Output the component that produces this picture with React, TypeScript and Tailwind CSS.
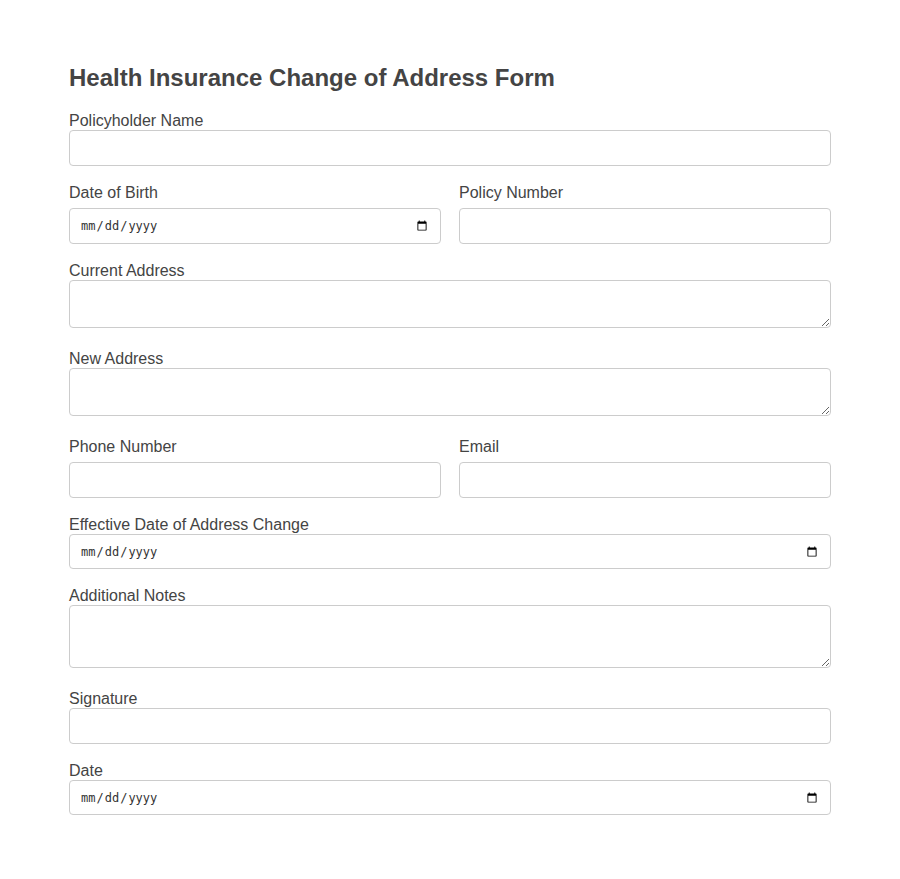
const inputCls =
  'block w-full h-[36px] rounded-[4px] border border-[#cccccc] bg-white px-[10px] text-[13px] text-black outline-none';
const dateCls =
  "block w-full h-[35px] rounded-[4px] border border-[#cccccc] bg-white px-[10px] font-['DejaVu_Sans_Mono',monospace] text-[12px] text-[#333333] outline-none";
const areaCls = 'block w-full rounded-[4px] border border-[#cccccc] bg-white px-[10px] py-[8px] text-[13px] text-black outline-none';
const labelCls = 'block pt-[1px] text-[16px] leading-[18px]';

export default function App() {
  return (
    <div className="min-h-screen bg-white font-['Liberation_Sans',Arial,sans-serif] text-[#444444]">
      <form className="mx-auto w-[762px] pt-[64px] pb-[40px]">
        <h2 className="mb-[19px] text-[24px] font-bold leading-[28px]">Health Insurance Change of Address Form</h2>

        <div className="mb-[17px]">
          <label className={labelCls}>Policyholder Name</label>
          <input type="text" className={inputCls} />
        </div>

        <div className="mb-[17px] grid grid-cols-2 gap-[18px]">
          <div>
            <label className={`${labelCls} mb-[6px]`}>Date of Birth</label>
            <input type="date" className={`${dateCls} h-[36px]`} />
          </div>
          <div>
            <label className={`${labelCls} mb-[6px]`}>Policy Number</label>
            <input type="text" className={inputCls} />
          </div>
        </div>

        <div className="mb-[21px]">
          <label className={labelCls}>Current Address</label>
          <textarea className={`${areaCls} h-[48px]`} />
        </div>

        <div className="mb-[21px]">
          <label className={labelCls}>New Address</label>
          <textarea className={`${areaCls} h-[48px]`} />
        </div>

        <div className="mb-[17px] grid grid-cols-2 gap-[18px]">
          <div>
            <label className={`${labelCls} mb-[6px]`}>Phone Number</label>
            <input type="tel" className={inputCls} />
          </div>
          <div>
            <label className={`${labelCls} mb-[6px]`}>Email</label>
            <input type="email" className={inputCls} />
          </div>
        </div>

        <div className="mb-[17px]">
          <label className={labelCls}>Effective Date of Address Change</label>
          <input type="date" className={dateCls} />
        </div>

        <div className="mb-[21px]">
          <label className={labelCls}>Additional Notes</label>
          <textarea className={`${areaCls} h-[63px]`} />
        </div>

        <div className="mb-[17px]">
          <label className={labelCls}>Signature</label>
          <input type="text" className={inputCls} />
        </div>

        <div>
          <label className={labelCls}>Date</label>
          <input type="date" className={dateCls} />
        </div>
      </form>
    </div>
  );
}
